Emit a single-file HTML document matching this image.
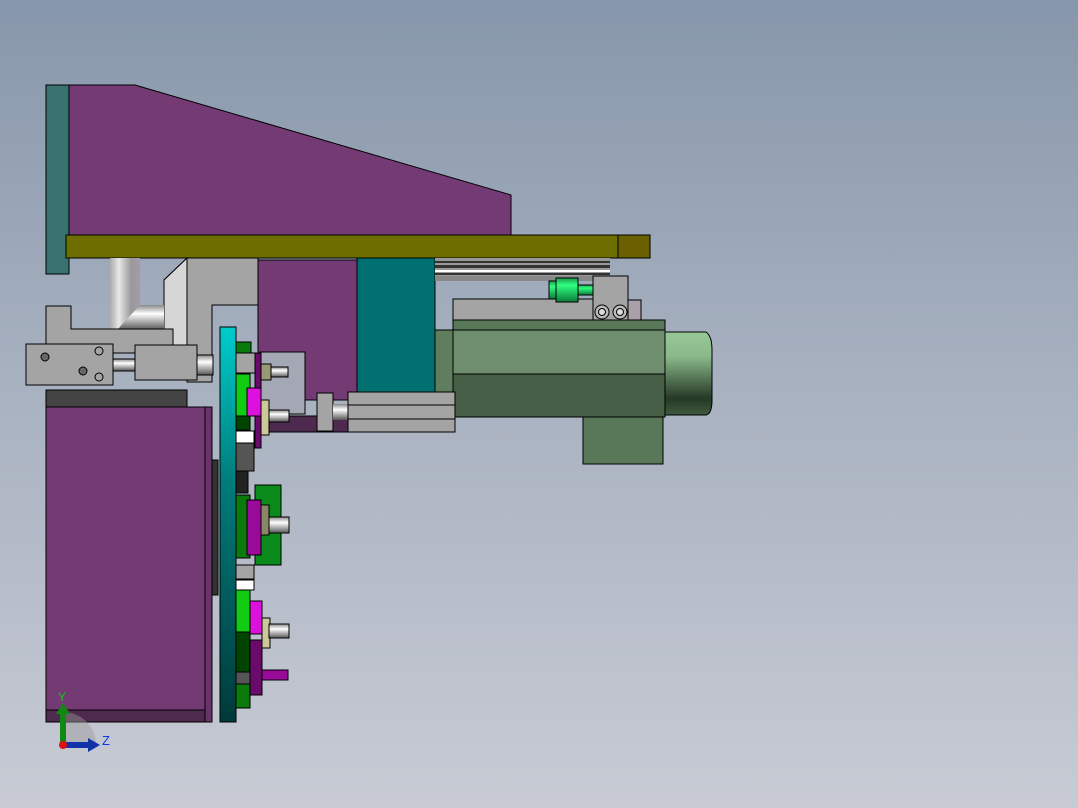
<!DOCTYPE html>
<html><head><style>
html,body{margin:0;padding:0;width:1078px;height:808px;overflow:hidden}
body{background:linear-gradient(180deg,#8797ab 0%,#a6b0bf 45%,#c8cbd4 100%)}
svg{position:absolute;left:0;top:0}
</style></head><body>
<svg width="1078" height="808" viewBox="0 0 1078 808" xmlns="http://www.w3.org/2000/svg">
<defs>
<linearGradient id="cyl" x1="0" x2="1"><stop offset="0" stop-color="#aaa"/><stop offset=".3" stop-color="#e8e8e8"/><stop offset=".7" stop-color="#999"/><stop offset="1" stop-color="#a79aa8"/></linearGradient>
<linearGradient id="rod" x1="0" y1="0" x2="0" y2="1"><stop offset="0" stop-color="#888"/><stop offset=".35" stop-color="#fff"/><stop offset="1" stop-color="#555"/></linearGradient>
<linearGradient id="plate" x1="0" y1="0" x2="0" y2="1"><stop offset="0" stop-color="#00cccc"/><stop offset=".4" stop-color="#007a7a"/><stop offset="1" stop-color="#003a3a"/></linearGradient>
<linearGradient id="cap" x1="0" y1="0" x2="0" y2="1"><stop offset="0" stop-color="#98c898"/><stop offset=".3" stop-color="#8ab88a"/><stop offset=".8" stop-color="#263826"/><stop offset="1" stop-color="#3f5a3f"/></linearGradient>
<linearGradient id="gc" x1="0" y1="0" x2="0" y2="1"><stop offset="0" stop-color="#1a9a4a"/><stop offset=".3" stop-color="#30ff80"/><stop offset="1" stop-color="#0a7a3a"/></linearGradient>
</defs>
<g stroke="#000" stroke-width="1">
<rect x="46" y="85" width="23" height="189" fill="#387270"/>
<polygon points="69,85 135,85 511,195 511,235 69,235" fill="#733a73"/>
<rect x="66" y="235" width="552" height="23" fill="#6e6e00"/>
<rect x="618" y="235" width="32" height="23" fill="#6a6000"/>
<rect x="110" y="258" width="30" height="75" fill="url(#cyl)" stroke="none"/>
<polygon points="164,280 187,258 258,258 258,305 212,305 212,382 187,382 187,330 164,330" fill="#a4a4a4"/>
<polygon points="164,280 187,258 187,345 164,345" fill="#d6d6d6"/>
<polygon points="117,330 140,305 164,305 164,330" fill="url(#rod)" stroke="none"/>
<polygon points="46,306 71,306 71,329 173,329 173,353 46,353" fill="#a4a4a4"/>
<rect x="26" y="344" width="87" height="41" fill="#a4a4a4"/>
<circle cx="45" cy="357" r="4" fill="#666"/><circle cx="83" cy="371" r="4" fill="#666"/>
<circle cx="99" cy="351" r="4" fill="none"/><circle cx="99" cy="377" r="4" fill="none"/>
<rect x="113" y="359" width="22" height="12" fill="url(#rod)"/>
<rect x="135" y="345" width="62" height="35" fill="#a4a4a4"/>
<rect x="197" y="355" width="16" height="20" fill="url(#rod)"/>
<rect x="46" y="390" width="141" height="17" fill="#444"/>
<rect x="46" y="407" width="166" height="315" fill="#733a73"/>
<rect x="46" y="710" width="166" height="12" fill="#4e2a4e"/>
<rect x="205" y="407" width="7" height="315" fill="#6a346a"/>
<rect x="212" y="460" width="6" height="135" fill="#333"/>
<rect x="258" y="260" width="99" height="140" fill="#733a73"/>
<rect x="357" y="258" width="78" height="135" fill="#007070"/>
<g stroke="none">
<rect x="435" y="258" width="175" height="18" fill="#999"/>
<rect x="435" y="261" width="175" height="2" fill="#333"/>
<rect x="435" y="265" width="175" height="3" fill="#333"/>
<rect x="435" y="270" width="175" height="2" fill="#fff"/>
<rect x="435" y="273" width="175" height="2" fill="#333"/>
<rect x="435" y="276" width="160" height="5" fill="#888"/>
</g>
<rect x="435" y="330" width="20" height="62" fill="#5e7e5e"/>
<rect x="453" y="299" width="140" height="26" fill="#a4a4a4"/>
<rect x="593" y="276" width="35" height="49" fill="#a4a4a4"/>
<rect x="628" y="300" width="13" height="23" fill="#a9a0aa"/>
<circle cx="602" cy="312" r="7" fill="#bbb"/><circle cx="602" cy="312" r="3.5" fill="#ddd"/>
<circle cx="620" cy="312" r="7" fill="#bbb"/><circle cx="620" cy="312" r="3.5" fill="#ddd"/>
<rect x="549" y="281" width="10" height="18" fill="url(#gc)"/>
<rect x="556" y="278" width="22" height="24" fill="url(#gc)"/>
<rect x="578" y="285" width="15" height="10" fill="url(#gc)"/>
<rect x="453" y="320" width="212" height="10" fill="#587858"/>
<rect x="453" y="330" width="212" height="44" fill="#6e8e6e"/>
<rect x="453" y="374" width="212" height="43" fill="#465e46"/>
<path d="M665 332 H706 Q712 336 712 350 V400 Q712 414 706 415 H665 Z" fill="url(#cap)"/>
<rect x="583" y="417" width="80" height="47" fill="#587858"/>
<rect x="258" y="416" width="92" height="16" fill="#4e2a4e"/>
<rect x="260" y="352" width="45" height="62" fill="#a4a8b4"/>
<rect x="317" y="393" width="16" height="38" fill="#a4a4a4"/>
<rect x="333" y="404" width="15" height="16" fill="url(#rod)" stroke="none"/>
<rect x="348" y="392" width="107" height="13" fill="#a4a4a4"/>
<rect x="348" y="405" width="107" height="14" fill="#a4a4a4"/>
<rect x="348" y="419" width="107" height="13" fill="#a4a4a4"/>
<rect x="220" y="327" width="16" height="395" fill="url(#plate)"/>
<rect x="236" y="342" width="15" height="11" fill="#0a7a0a"/>
<rect x="236" y="353" width="19" height="20" fill="#a4a4a4"/>
<rect x="255" y="353" width="6" height="95" fill="#6a0a6a"/>
<rect x="236" y="374" width="14" height="42" fill="#11cc11"/>
<rect x="247" y="388" width="14" height="28" fill="#dd11dd"/>
<rect x="236" y="416" width="14" height="14" fill="#004400"/>
<rect x="236" y="431" width="18" height="12" fill="#fff"/>
<rect x="236" y="443" width="18" height="28" fill="#555"/>
<rect x="236" y="471" width="12" height="22" fill="#222"/>
<rect x="261" y="364" width="10" height="16" fill="#999977"/>
<rect x="271" y="367" width="17" height="10" fill="url(#rod)"/>
<rect x="261" y="400" width="8" height="35" fill="#ccc899"/>
<rect x="269" y="410" width="20" height="12" fill="url(#rod)"/>
<rect x="255" y="485" width="26" height="80" fill="#0a8a1a"/>
<rect x="236" y="495" width="14" height="63" fill="#0a7a0a"/>
<rect x="247" y="500" width="14" height="55" fill="#990a99"/>
<rect x="261" y="505" width="8" height="30" fill="#888866"/>
<rect x="269" y="517" width="20" height="16" fill="url(#rod)"/>
<rect x="236" y="565" width="18" height="14" fill="#a4a4a4"/>
<rect x="236" y="580" width="18" height="10" fill="#fff"/>
<rect x="236" y="590" width="14" height="42" fill="#11cc11"/>
<rect x="250" y="601" width="12" height="33" fill="#dd11dd"/>
<rect x="236" y="632" width="14" height="40" fill="#004400"/>
<rect x="250" y="640" width="12" height="55" fill="#6a0a6a"/>
<rect x="262" y="618" width="8" height="30" fill="#ccc899"/>
<rect x="269" y="624" width="20" height="14" fill="url(#rod)"/>
<rect x="262" y="670" width="26" height="10" fill="#990a99"/>
<rect x="236" y="672" width="14" height="12" fill="#555"/>
<rect x="236" y="684" width="14" height="24" fill="#0a7a0a"/>
</g>
<path d="M63 712 A33 33 0 0 1 96 745 L63 745 Z" fill="#999" opacity=".45"/>
<rect x="60" y="712" width="6" height="33" fill="#118811"/>
<polygon points="56,714 63,703 70,714" fill="#118811"/>
<rect x="63" y="742" width="27" height="6" fill="#1133aa"/>
<polygon points="88,738 100,745 88,752" fill="#1133aa"/>
<circle cx="63" cy="745" r="4" fill="#dd1111"/>
<text x="58" y="701" font-family="Liberation Sans, sans-serif" font-size="12" fill="#11cc11">Y</text>
<text x="102" y="745" font-family="Liberation Sans, sans-serif" font-size="13" fill="#1133ee">Z</text>
</svg>
</body></html>
